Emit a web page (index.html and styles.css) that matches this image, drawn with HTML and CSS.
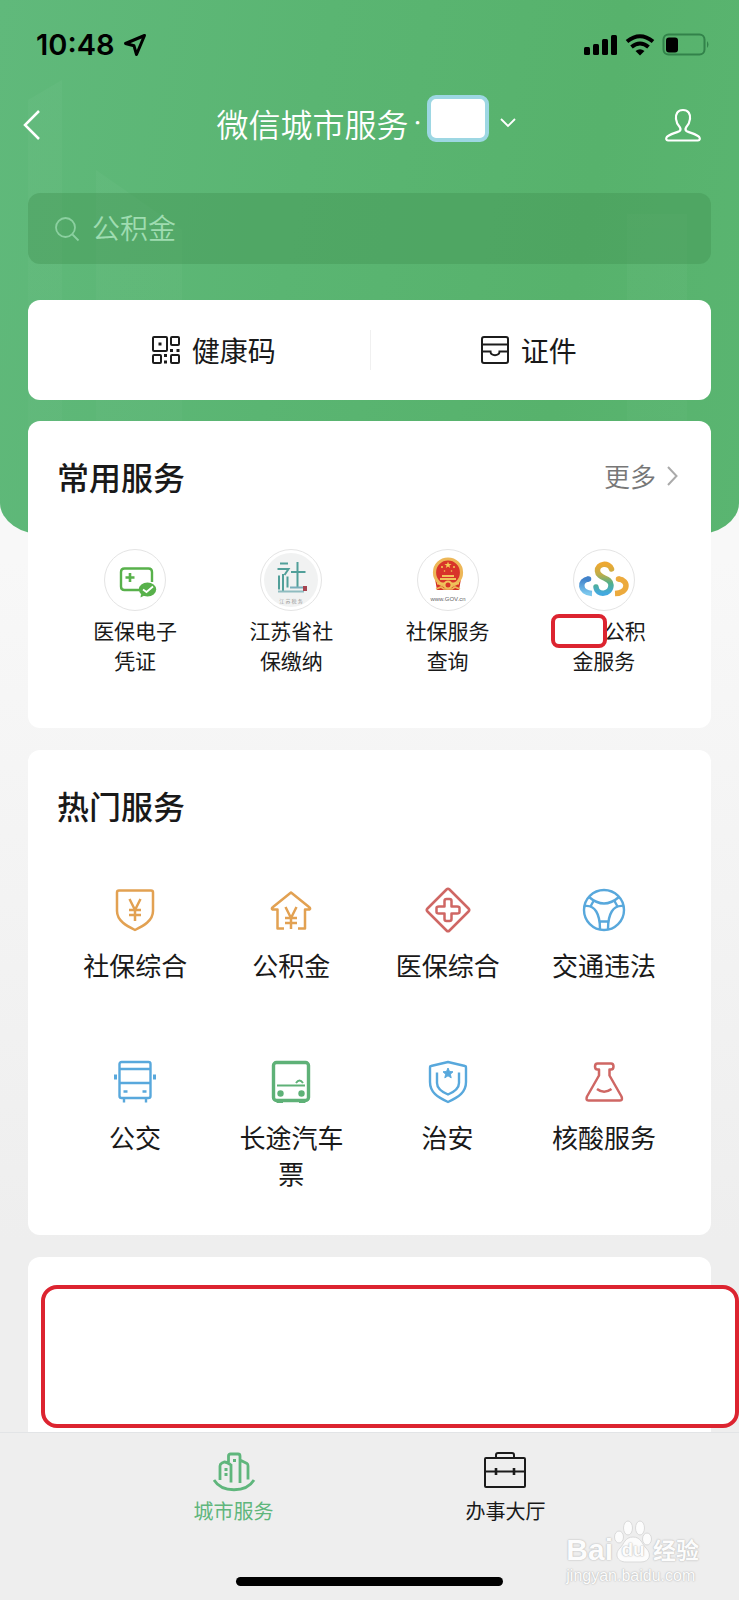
FILE: index.html
```html
<!DOCTYPE html>
<html lang="zh-CN">
<head>
<meta charset="utf-8">
<meta name="viewport" content="width=device-width, initial-scale=1">
<title>微信城市服务</title>
<link rel="stylesheet" href="styles.css">
</head>
<body>
<div class="hero" aria-hidden="true"><i class="beam beam-a"></i><i class="beam beam-b"></i><i class="beam beam-c"></i></div>

<div class="status">
  <span class="time">10:48</span>
  <svg class="locate" width="24" height="24" viewBox="0 0 24 24" fill="none" stroke="#000" stroke-width="3" stroke-linejoin="round"><path d="M21.500 2.500 2.500 10.500 11 12.800 13.500 21.500Z"/></svg>
  <svg class="signals" width="128" height="24" viewBox="0 0 128 24">
    <rect x="1" y="14" width="6" height="8" rx="1.500"/><rect x="10" y="11" width="6" height="11" rx="1.500"/><rect x="19" y="6" width="6" height="16" rx="1.500"/><rect x="28" y="2" width="6" height="20" rx="1.500"/>
    <g fill="none" stroke="#000" stroke-width="4"><path d="M44 8.500Q57 -2 70 8.500"/><path d="M48.500 14Q57 7 65.500 14"/></g><path d="M52.500 18Q57 14.500 61.500 18L57 22.500Z"/>
    <rect x="80.500" y="1.500" width="41" height="20" rx="5" fill="none" stroke="#32824a" stroke-width="2"/><rect x="83" y="4.500" width="12" height="15" rx="3"/><path d="M124 8q3 3.500 0 7z" fill="#32824a"/>
  </svg>
</div>

<header class="nav">
  <button class="icon-btn" aria-label="返回"><svg width="20" height="32" viewBox="0 0 20 32" fill="none" stroke="#fff" stroke-width="2.500"><path d="M17 2 3 16 17 30"/></svg></button>
  <button class="city"><span>微信城市服务</span><span class="dot">·</span><span class="city-name"></span><svg width="18" height="12" viewBox="0 0 18 12" fill="none" stroke="#fff" stroke-width="1.800"><path d="m2 2 7 7 7-7"/></svg></button>
  <button class="icon-btn" aria-label="个人中心"><svg width="38" height="34" viewBox="0 0 38 34" fill="none" stroke="#fff" stroke-width="2.200" stroke-linejoin="round"><path d="M19 2C13.500 2 11.500 6 12 11c.3 4 2.300 6.500 4 8.500.8 1.500.4 3-.8 3.700C10 25.500 5 26.500 2.800 29c-1 1.500-.8 3.500 1.200 3.500h30c2 0 2.200-2 1.200-3.500C33 26.500 28 25.500 22.800 23.200c-1.200-.7-1.600-2.200-.8-3.700 1.700-2 3.700-4.500 4-8.500C26.500 6 24.500 2 19 2Z"/></svg></button>
</header>

<main class="content">
  <label class="search">
    <svg width="26" height="26" viewBox="0 0 26 26" fill="none" stroke="#8bd0a0" stroke-width="1.800"><circle cx="11.500" cy="11.500" r="9.500"/><path d="m18.500 18.500 6 6"/></svg>
    <input type="search" placeholder="公积金" aria-label="搜索服务">
  </label>

  <section class="card quick">
    <a href="#code"><svg width="28" height="28" viewBox="0 0 28 28" fill="none" stroke="#1c1c1c" stroke-width="2"><rect x="1" y="1" width="14" height="14" rx="1"/><rect x="19" y="1" width="8" height="8" rx="1"/><rect x="1" y="19" width="8" height="8" rx="1"/><rect x="19" y="19" width="8" height="8" rx="1"/><g fill="#1c1c1c" stroke="none"><path d="M6.500 6.500h3v3h-3zM18 13h3v3h-3zM24.500 13h3v3h-3zM12 18h3v3h-3zM12 24.500h3v3h-3z"/></g></svg>健康码</a>
    <a href="#cards"><svg width="28" height="28" viewBox="0 0 28 28" fill="none" stroke="#1c1c1c" stroke-width="2"><rect x="1" y="1" width="26" height="26" rx="2"/><path d="M1 8.500h26M1 15.500h8.500c0 5 9 5 9 0H27"/></svg>证件</a>
  </section>

  <section class="card common">
    <div class="card-head"><h2>常用服务</h2><a class="more" href="#more">更多<svg width="14" height="22" viewBox="0 0 14 22" fill="none" stroke="#aaa" stroke-width="2"><path d="m3 2 8.500 9L3 20"/></svg></a></div>
    <div class="grid">
      <a class="small" href="#s1">
        <span class="disc"><svg width="60" height="60" viewBox="0 0 60 60" fill="none"><path d="M34 40H19.500Q16 40 16 36.500V22Q16 18.500 19.500 18.500H43.500Q47 18.500 47 22V32" stroke="#58b14b" stroke-width="2.400"/><path d="M25 23v9M20.500 27.500h9" stroke="#58b14b" stroke-width="2.600"/><ellipse cx="42.500" cy="39.500" rx="8.700" ry="7" fill="#58b14b"/><path d="m36 44-.5 3.500 4-2z" fill="#58b14b"/><path d="m38 39.500 3.500 2.500 6.500-5.500" stroke="#fff" stroke-width="1.800"/></svg></span>
        <span>医保电子凭证</span></a>
      <a class="small" href="#s2">
        <span class="disc"><svg width="60" height="60" viewBox="0 0 60 60" fill="none"><circle cx="30" cy="30" r="27" fill="#f1f2f2"/><g stroke="#519f99" stroke-width="2"><path d="M19 13.500h8M16.500 19h11l-4 6M22 24v17M18 25.500v14M26.500 26.500v11M36.500 12v25M30 22h14.500"/></g><path d="M17 41.500h26" stroke="#8fbcc0" stroke-width="2"/><path d="M29 37.500h14" stroke="#79aebb" stroke-width="2"/><path d="M42 36h4v5h-4z" fill="#a5424f"/><text x="30" y="52.500" class="seal-text">江 苏 税 务</text></svg></span>
        <span>江苏省社保缴纳</span></a>
      <a class="small" href="#s3">
        <span class="disc"><svg width="60" height="60" viewBox="0 0 60 60" fill="none"><path d="M17 29h26l-2 11H19z" fill="#d63125"/><circle cx="30" cy="22.500" r="13.500" fill="#d8342a" stroke="#edb758" stroke-width="3.200"/><path d="m30 11.500 .9 2.500h2.700l-2.200 1.600.8 2.500-2.200-1.500-2.200 1.500.8-2.500-2.200-1.600h2.700z" fill="#f4ce55"/><g fill="#f4ce55"><circle cx="24" cy="17" r="1"/><circle cx="36" cy="17" r="1"/><circle cx="26.500" cy="21" r=".8"/><circle cx="33.500" cy="21" r=".8"/></g><path d="M24 26h12M22 29h16M19 33.500h22" stroke="#f0c35b" stroke-width="2"/><circle cx="30" cy="35" r="3.500" fill="#d8342a" stroke="#f0c35b" stroke-width="2"/><path d="m18 39 5-2 3 2h8l3-2 5 2" stroke="#edb758" stroke-width="1.600"/><text x="30" y="50.500" class="gov-text">www.GOV.cn</text></svg></span>
        <span>社保服务查询</span></a>
      <a class="small" href="#s4">
        <span class="disc"><svg width="60" height="60" viewBox="0 0 60 60" fill="none" stroke-width="5.500"><defs><linearGradient id="s" x1="0" y1="0" x2="0" y2="1"><stop stop-color="#eda832"/><stop offset=".35" stop-color="#c0ae49"/><stop offset=".65" stop-color="#52b08a"/><stop offset="1" stop-color="#43a9df"/></linearGradient><linearGradient id="l" x1="0" y1="0" x2="0" y2="1"><stop stop-color="#4282ca"/><stop offset="1" stop-color="#7bc7ed"/></linearGradient></defs><path d="M14.500 29C5 30 5 43 18 43.500" stroke="url(#l)"/><path d="M44.500 29C55 30 55 43 41 43.500" stroke="#ecaa3d"/><g stroke-linecap="round"><path d="M14.500 29h-.1" stroke="#4282ca"/><path d="M44.500 29h.1" stroke="#ecaa3d"/><path d="M37.500 19C35 12 23 13 23.500 21C24 29 37 27 37 35C37 45 23 46 22 37" stroke="url(#s)"/></g></svg></span>
        <span><span class="masked"></span>公积金服务</span></a>
    </div>
  </section>

  <section class="card hot">
    <div class="card-head"><h2>热门服务</h2></div>
    <div class="grid">
      <a href="#h1"><svg width="46" height="46" viewBox="0 0 46 46" fill="none" stroke="#e2a152" stroke-width="2.500" stroke-linejoin="round"><path d="M7 3.500H39Q41 3.500 41 5.500V24C41 34 31 39 23 43C15 39 5 34 5 24V5.500Q5 3.500 7 3.500Z"/><path d="m17.500 12 5.500 11 5.500-11M23 23v11M17 23h12M17 28h12"/></svg><span>社保综合</span></a>
      <a href="#h2"><svg width="46" height="46" viewBox="0 0 46 46" fill="none" stroke="#e2a152" stroke-width="2.500" stroke-linejoin="round"><path d="M16 41.500H9.500V22.500H4.500Q3 21.500 5 20L23 5.500 41 20Q43 21.500 41.500 22.500H37V41.500H30"/><path d="m17.500 20 5.500 11 5.500-11M23 31v11M17 31h12M17 36h12"/></svg><span>公积金</span></a>
      <a href="#h3"><svg width="46" height="46" viewBox="0 0 46 46" fill="none" stroke="#cf6764" stroke-width="2.500" stroke-linejoin="round"><path d="M21.500 2.500Q23 1 24.500 2.500L43.500 21.500Q45 23 43.500 24.500L24.500 43.500Q23 45 21.500 43.500L2.500 24.500Q1 23 2.500 21.500Z"/><path d="M19.500 14Q19.500 12 21.500 12h3Q26.500 12 26.500 14v5.500H32Q34.500 19.500 34.500 21v4Q34.500 26.500 32 26.500h-5.500V32Q26.500 34 24.500 34h-3Q19.500 34 19.500 32v-5.500H14Q11.500 26.500 11.500 25v-4Q11.500 19.500 14 19.500h5.500Z"/></svg><span>医保综合</span></a>
      <a href="#h4"><svg width="46" height="46" viewBox="0 0 46 46" fill="none" stroke="#58a8dc" stroke-width="2.400"><circle cx="23" cy="23" r="20"/><path d="M8 10Q23 23 38 10M4 19C14 18 19 27 19 42M42 19C32 18 27 27 27 42M12.500 14 9.500 19.500M33.500 14l3 5.500M19 34.500h8"/></svg><span>交通违法</span></a>
      <a href="#h5"><svg width="46" height="46" viewBox="0 0 46 46" fill="none" stroke="#58a8dc" stroke-width="2.400"><rect x="7.500" y="3" width="31" height="36" rx="2"/><path d="M7.500 10h31M7.500 24h31M12 39v4.500M34 39v4.500M11.500 32.500h4M30.500 32.500h4"/><path d="M3.500 15.500v5M42.500 15.500v5" stroke-width="3"/></svg><span>公交</span></a>
      <a href="#h6"><svg width="46" height="46" viewBox="0 0 46 46" fill="none" stroke="#5eb177" stroke-width="3.400"><rect x="5.500" y="3.500" width="35" height="38" rx="3"/><path d="M9 26.500h28" stroke-width="2"/><path d="M28 24q3.500-5 7 0" stroke-width="2"/><g fill="#5eb177" stroke="none"><circle cx="12.500" cy="34.500" r="3.200"/><circle cx="33.500" cy="34.500" r="3.200"/><path d="M7 41h8v3H9zM31 41h8l-2 3h-6z"/></g></svg><span>长途汽车票</span></a>
      <a href="#h7"><svg width="46" height="46" viewBox="0 0 46 46" fill="none" stroke="#58a8dc" stroke-width="2.400" stroke-linejoin="round"><path d="M23 3 40 7Q41 7 41 9V23C41 33 34 38 23 43C12 38 5 33 5 23V9Q5 7 6 7Z"/><path d="M12 13.500V24C12 30 17 33 23 35.500C29 33 34 30 34 24V13.500"/><path d="m23 9 1.500 3.500 3.500.3-2.700 2.400.9 3.600-3.200-2-3.200 2 .9-3.600-2.700-2.400 3.500-.3z" fill="#58a8dc" stroke-width="1"/></svg><span>治安</span></a>
      <a href="#h8"><svg width="46" height="46" viewBox="0 0 46 46" fill="none" stroke="#cf6764" stroke-width="2.500" stroke-linejoin="round"><path d="M18 10.500H16.500Q14 10.500 14 7.500T16.500 4.500H30Q32.500 4.500 32.500 7.500T30 10.500H28.500V16.500L40.500 37.500Q42 41.500 39 41.500H7.500Q4.500 41.500 6 37.500L18 16.500Z"/><path d="M16 30q7 5.500 14.500 0"/></svg><span>核酸服务</span></a>
    </div>
  </section>

  <section class="card notice"><div class="frame"></div></section>
</main>

<footer class="bottom">
  <nav class="tabs">
    <a class="active" href="#city"><svg width="44" height="42" viewBox="0 0 44 42" fill="none" stroke="#5fb67c" stroke-width="2.800"><path d="M2 29C10 42 34 42 42 29M8 29V15Q8 13 10 12L12.500 11Q15 11 19 14V31.500M16.500 11V5Q16.500 3 18.500 3H26Q28 3 28 5V32M28 9l7 3.500Q36 13 36 15V28.500"/><path d="M14 17v3M14 22v3M22.500 8v3" stroke-width="3"/></svg>城市服务</a>
    <a href="#hall"><svg width="44" height="42" viewBox="0 0 44 42" fill="none" stroke="#1b1b1b" stroke-width="2"><rect x="2" y="7" width="40" height="29" rx="1"/><path d="M13 7V4q0-2 2-2h14q2 0 2 2v3M2 20.500h40"/><path d="M13 17v7M31 17v7" stroke-width="2.600"/></svg>办事大厅</a>
  </nav>
  <div class="home-bar"></div>
  <div class="watermark" aria-hidden="true">
    <div class="brand"><span class="latin">Bai</span><span class="paw"><svg width="40" height="44" viewBox="0 0 40 44" fill="#fcfcfc" stroke="#dadada"><ellipse cx="6" cy="17" rx="4.500" ry="6"/><ellipse cx="15" cy="8" rx="4.500" ry="7"/><ellipse cx="27" cy="8" rx="4.500" ry="7"/><ellipse cx="34" cy="19" rx="4.500" ry="6"/><path d="M20 17C12 17 11 24 7 28C1 34 4 42 13 42H28C37 42 39 34 33 28C29 24 28 17 20 17Z"/></svg><span class="du">du</span></span><span class="cn">经验</span></div>
    <div class="url">jingyan.baidu.com</div>
  </div>
</footer>
</body>
</html>
```

FILE: styles.css
```css
*, *::after { box-sizing: border-box; }

body {
  margin: 0;
  min-height: 100vh;
  position: relative;
  display: flex;
  flex-direction: column;
  background: linear-gradient(#f8f8f8 0, #f8f8f8 560px, #eee 1240px);
  color: #191919;
  font-family: "Noto Sans CJK SC", sans-serif;
}

a { color: inherit; text-decoration: none; }
button { border: 0; padding: 0; background: none; color: inherit; font: inherit; }
svg { display: block; flex: none; }
h2 { margin: 0; font-size: 32px; line-height: 38px; font-weight: 500; }

.hero {
  position: absolute;
  inset: 0 0 auto;
  height: 535px;
  z-index: -1;
  overflow: hidden;
  border-radius: 0 0 46px 46px / 0 0 32px 32px;
  background: linear-gradient(100deg, #60b97b, #5ab572 40%, #57b26c 75%, #5ab571);
}
.beam { position: absolute; bottom: 0; background: linear-gradient(#ffffff07, #ffffff04); }
.beam-a { left: 28px; width: 34px; top: 80px; clip-path: polygon(0 20px, 100% 0, 100% 100%, 0 100%); }
.beam-b { left: 96px; width: 86px; top: 170px; clip-path: polygon(0 0, 100% 60px, 100% 100%, 0 100%); }
.beam-c { right: 52px; width: 60px; top: 214px; }

.status { display: flex; align-items: center; height: 88px; padding: 2px 28px 0 36px; }
.time { font: 600 29px/32px Inter, sans-serif; color: #000; }
.locate { margin-left: 8px; }
.signals { margin-left: auto; }

.nav { display: flex; align-items: center; justify-content: space-between; height: 72px; padding: 2px 37px 0 22px; color: #fff; }
.city { display: flex; align-items: center; font-size: 32px; line-height: 40px; font-weight: 350; margin: -4px 0 0 27px; }
.dot { width: 18px; text-align: center; font-family: Inter, sans-serif; }
.city-name { width: 62px; height: 47px; margin: -10px 10px 0 0; background: #fff; border: 4px solid #9dd7e3; border-radius: 9px; }

.content { flex: 1; display: flex; flex-direction: column; padding: 33px 28px 0; }

.search { display: flex; align-items: center; gap: 12px; height: 71px; padding: 0 26px; margin-bottom: 36px; border-radius: 12px; background: rgba(67, 148, 83, .42); }
.search input { flex: 1; min-width: 0; padding: 0 0 4px; border: 0; outline: 0; background: none; font: 350 28px/40px "Noto Sans CJK SC", sans-serif; color: #fff; }
.search input::placeholder { color: #9fdcb1; opacity: 1; }

.card { background: #fff; border-radius: 12px; margin-bottom: 22px; }

.quick { display: flex; align-items: center; height: 100px; margin-bottom: 21px; font-size: 28px; line-height: 40px; }
.quick a { width: 50%; display: flex; justify-content: center; align-items: center; gap: 12px; }
.quick a + a { border-left: 1px solid #f0f0f0; padding-right: 24px; }
.quick a:first-child { padding-left: 30px; }

.card-head { display: flex; justify-content: space-between; align-items: center; }
.more { display: flex; align-items: center; gap: 9px; padding-right: 3px; font-size: 26px; line-height: 38px; font-weight: 350; color: #777; }

.common { padding: 36px 29px 53px; }
.hot { padding: 36px 29px 43px; }
.grid { display: grid; grid-template-columns: repeat(4, 1fr); }
.grid a { display: flex; flex-direction: column; align-items: center; gap: 14px; text-align: center; font-size: 26px; line-height: 36px; }
.grid a > span:last-child { max-width: 4em; }
.grid .small { gap: 4px; font-size: 21px; line-height: 30px; }
.common .grid { margin-top: 54px; }
.hot .grid { margin-top: 63px; row-gap: 76px; }
.hot .grid a:nth-child(n + 5) { min-height: 133px; }

.disc { width: 62px; height: 62px; border: 1px solid #e4e4e4; border-radius: 50%; }
.seal-text { font: 5px "Noto Sans CJK SC", sans-serif; fill: #999; text-anchor: middle; }
.gov-text { font: 6px "Liberation Sans", sans-serif; fill: #666; text-anchor: middle; }

.masked { position: relative; display: inline-block; width: 2em; height: 1em; }
.masked::after { content: ""; position: absolute; right: -3px; top: -4px; width: 56px; height: 34px; border: 4px solid #dc2430; border-radius: 8px; background: #fff; }

.notice { flex: 1; margin: 0; padding: 28px 0 4px 13px; border-radius: 12px 12px 0 0; display: flex; }
.frame { flex: 1; margin-right: -28px; min-height: 140px; border: 4px solid #dc2430; border-radius: 16px; background: #fff; }

.bottom { position: relative; height: 168px; padding: 18px 0 14px; border-top: 1px solid #e2e4e6; background: #eee; display: flex; flex-direction: column; align-items: center; justify-content: space-between; }
.tabs { display: flex; width: 73.6%; }
.tabs a { flex: 1; display: flex; flex-direction: column; align-items: center; gap: 3px; font-size: 20px; line-height: 30px; }
.tabs .active { color: #5fb67c; }
.home-bar { width: 36%; height: 9px; border-radius: 5px; background: #000; }

.watermark { position: absolute; right: 40px; bottom: 15px; color: #fcfcfc; text-shadow: 0 0 1px #bbb, 0 0 2px #bbb; }
.brand { display: flex; align-items: flex-end; }
.latin { font: bold 30px/28px "Liberation Sans", sans-serif; }
.paw { position: relative; }
.du { position: absolute; inset: auto 0 4px; text-align: center; font: bold 19px/20px "Liberation Sans", sans-serif; }
.cn { font-size: 23px; line-height: 30px; font-weight: 700; }
.url { margin-top: 3px; font: 16px/18px "Liberation Sans", sans-serif; }
```
